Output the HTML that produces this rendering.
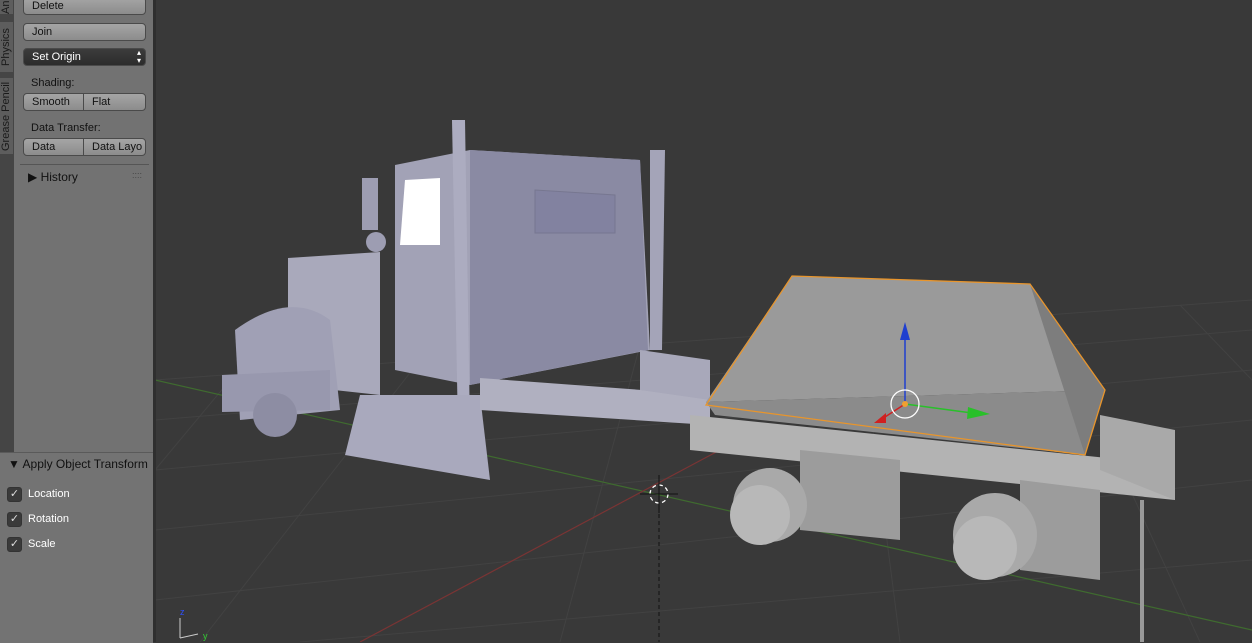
<!DOCTYPE html>
<html><head><meta charset="utf-8"><style>
body{margin:0;width:1252px;height:642px;overflow:hidden;background:#393939;font-family:"Liberation Sans",sans-serif;position:relative}
.tabs{position:absolute;left:0;top:0;width:14px;height:452px;background:#454545}
.tab{position:absolute;left:0;width:13px;background:#5d5d5d;color:#1a1a1a;font-size:11px;writing-mode:vertical-rl;transform:rotate(180deg);text-align:center;line-height:13px;overflow:hidden;white-space:nowrap}
.panel{position:absolute;left:14px;top:0;width:139px;height:452px;background:#727272}
.edge{position:absolute;left:153px;top:0;width:3px;height:642px;background:#2f2f2f}
.low{position:absolute;left:0;top:452px;width:153px;height:190px;background:#737373;border-top:1px solid #5a5a5a}
.btn{position:absolute;height:18px;border:1px solid #4a4a4a;border-radius:4px;background:linear-gradient(#a5a5a5,#8c8c8c);font-size:11px;color:#111;line-height:17px;box-sizing:border-box;padding-left:8px}
.lbl{position:absolute;font-size:11px;color:#111}
.cb{position:absolute;left:7px;width:13px;height:13px;border:1px solid #333;border-radius:3px;background:#3a3a3a;color:#ddd;font-size:11px;line-height:12px;text-align:center}
.cbl{position:absolute;left:28px;font-size:11px;color:#fff}
</style></head><body>
<svg width="1252" height="642" style="position:absolute;left:0;top:0">
<g stroke="#424242" stroke-width="1" fill="none">
<path d="M155 380 L1252 300 M155 420 L1252 330 M155 470 L1252 370 M155 530 L1252 420 M155 600 L1252 480 M300 642 L1252 560"/>
<path d="M230 380 L155 470 M420 360 L200 642 M640 345 L560 642 M860 330 L900 642 M1050 315 L1200 642 M1180 305 L1252 380"/>
</g>
<path d="M155 380 L1252 630" stroke="#3f6b2f" stroke-width="1.2"/>
<path d="M360 642 L720 450" stroke="#7a3434" stroke-width="1.2"/>
<path d="M659 500 L659 642" stroke="#111" stroke-dasharray="4 3"/>
<g fill="#9d9db2">
<path d="M288 258 L380 252 L380 395 L288 385 Z" fill="#a9a9bb"/>
<path d="M395 165 L470 150 L640 160 L650 350 L470 385 L395 370 Z" fill="#a2a2b6"/>
<path d="M470 150 L640 160 L648 350 L470 385 Z" fill="#8a8aa3"/>
<path d="M535 190 L615 195 L615 233 L535 233 Z" fill="#8282a0" stroke="#777790"/>
<path d="M405 180 L440 178 L440 245 L400 245 Z" fill="#fff"/>
<path d="M452 120 L465 120 L470 430 L458 430 Z" fill="#acacc0"/>
<path d="M650 150 L665 150 L662 350 L650 350 Z" fill="#a4a4b8"/>
<path d="M235 330 Q290 290 330 320 L340 410 L240 420 Z" fill="#a0a0b5"/>
<path d="M222 375 L330 370 L330 410 L222 412 Z" fill="#9898ae"/>
<circle cx="275" cy="415" r="22" fill="#8d8da3"/>
<path d="M360 395 L480 395 L490 480 L345 455 Z" fill="#a9a9bd"/>
<path d="M480 378 L710 395 L710 425 L480 410 Z" fill="#b0b0c0"/>
<path d="M640 350 L710 360 L710 400 L640 390 Z" fill="#a8a8ba"/>
<path d="M362 178 L378 178 L378 230 L362 230 Z"/>
<circle cx="376" cy="242" r="10"/>
</g>
<path d="M792 276 L1030 284 L1105 390 L706 402 Z" fill="#9a9a9a"/>
<path d="M706 402 L1105 390 L1085 455 L715 415 Z" fill="#8b8b8b"/>
<path d="M1030 284 L1105 390 L1085 455 Z" fill="#7d7d7d"/>
<path d="M792 276 L1030 284 L1105 390 L1085 455 L706 405 Z" fill="none" stroke="#e8952c" stroke-width="1.3"/>
<g fill="#a9a9a9">
<path d="M690 415 L1175 465 L1175 500 L690 450 Z" fill="#b3b3b3"/>
<path d="M1100 415 L1175 430 L1175 500 L1100 470 Z"/>
<path d="M800 450 L900 460 L900 540 L800 530 Z" fill="#9c9c9c"/>
<path d="M1020 480 L1100 490 L1100 580 L1020 570 Z" fill="#9c9c9c"/>
<circle cx="770" cy="505" r="37"/>
<circle cx="760" cy="515" r="30" fill="#b8b8b8"/>
<circle cx="995" cy="535" r="42"/>
<circle cx="985" cy="548" r="32" fill="#b8b8b8"/>
</g>
<path d="M1142 500 L1142 642" stroke="#999" stroke-width="4"/>
<path d="M905 404 L905 335" stroke="#1f3fd0" stroke-width="1.5"/>
<path d="M900 340 L905 322 L910 340 Z" fill="#1f3fd0"/>
<path d="M905 404 L972 413" stroke="#29c02a" stroke-width="1.5"/>
<path d="M968 407 L990 414 L967 419 Z" fill="#29c02a"/>
<path d="M905 404 L885 417" stroke="#d02020" stroke-width="1.5"/>
<path d="M874 423 L886 413 L886 423 Z" fill="#d02020"/>
<circle cx="905" cy="404" r="14" fill="none" stroke="#fff" stroke-width="1.3"/>
<circle cx="905" cy="404" r="3" fill="#f0a030"/>
<circle cx="659" cy="494" r="9" fill="none" stroke="#fff" stroke-dasharray="4 3" stroke-width="1.3"/>
<path d="M640 494 L678 494 M659 475 L659 513" stroke="#111"/>
<path d="M180 638 L180 618 M180 638 L198 634" stroke="#ccc"/>
<text x="180" y="615" font-size="9" fill="#2d50ff" font-family="Liberation Sans">z</text>
<text x="203" y="639" font-size="9" fill="#3c3" font-family="Liberation Sans">y</text>
</svg>
<div class="tabs">
<div class="tab" style="top:0;height:14px">An</div>
<div class="tab" style="top:22px;height:50px">Physics</div>
<div class="tab" style="top:78px;height:76px">Grease Pencil</div>
</div>
<div class="panel"></div>
<div class="edge"></div>
<div class="btn" style="left:23px;top:-3px;width:123px">Delete</div>
<div class="btn" style="left:23px;top:23px;width:123px">Join</div>
<div class="btn" style="left:23px;top:48px;width:123px;background:linear-gradient(#3c3c3c,#2c2c2c);color:#fff">Set Origin<span style="position:absolute;right:4px;top:0px;font-size:8px;line-height:8px">▴<br>▾</span></div>
<div class="lbl" style="left:31px;top:77px">Shading:</div>
<div class="btn" style="left:23px;top:93px;width:61px;border-radius:4px 0 0 4px">Smooth</div>
<div class="btn" style="left:83px;top:93px;width:63px;border-radius:0 4px 4px 0">Flat</div>
<div class="lbl" style="left:31px;top:122px">Data Transfer:</div>
<div class="btn" style="left:23px;top:138px;width:61px;border-radius:4px 0 0 4px">Data</div>
<div class="btn" style="left:83px;top:138px;width:63px;border-radius:0 4px 4px 0;overflow:hidden;white-space:nowrap">Data Layo</div>
<div style="position:absolute;left:20px;top:164px;width:129px;height:1px;background:#555"></div>
<div class="lbl" style="left:28px;top:170px;font-size:12px">▶ History</div>
<div class="lbl" style="left:132px;top:170px;font-size:9px;color:#444">::::</div>
<div class="low"></div>
<div class="lbl" style="left:8px;top:457px;font-size:12px;white-space:nowrap">▼ Apply Object Transform</div>
<div class="cb" style="top:487px">✓</div><div class="cbl" style="top:488px">Location</div>
<div class="cb" style="top:512px">✓</div><div class="cbl" style="top:513px">Rotation</div>
<div class="cb" style="top:537px">✓</div><div class="cbl" style="top:538px">Scale</div>
</body></html>
